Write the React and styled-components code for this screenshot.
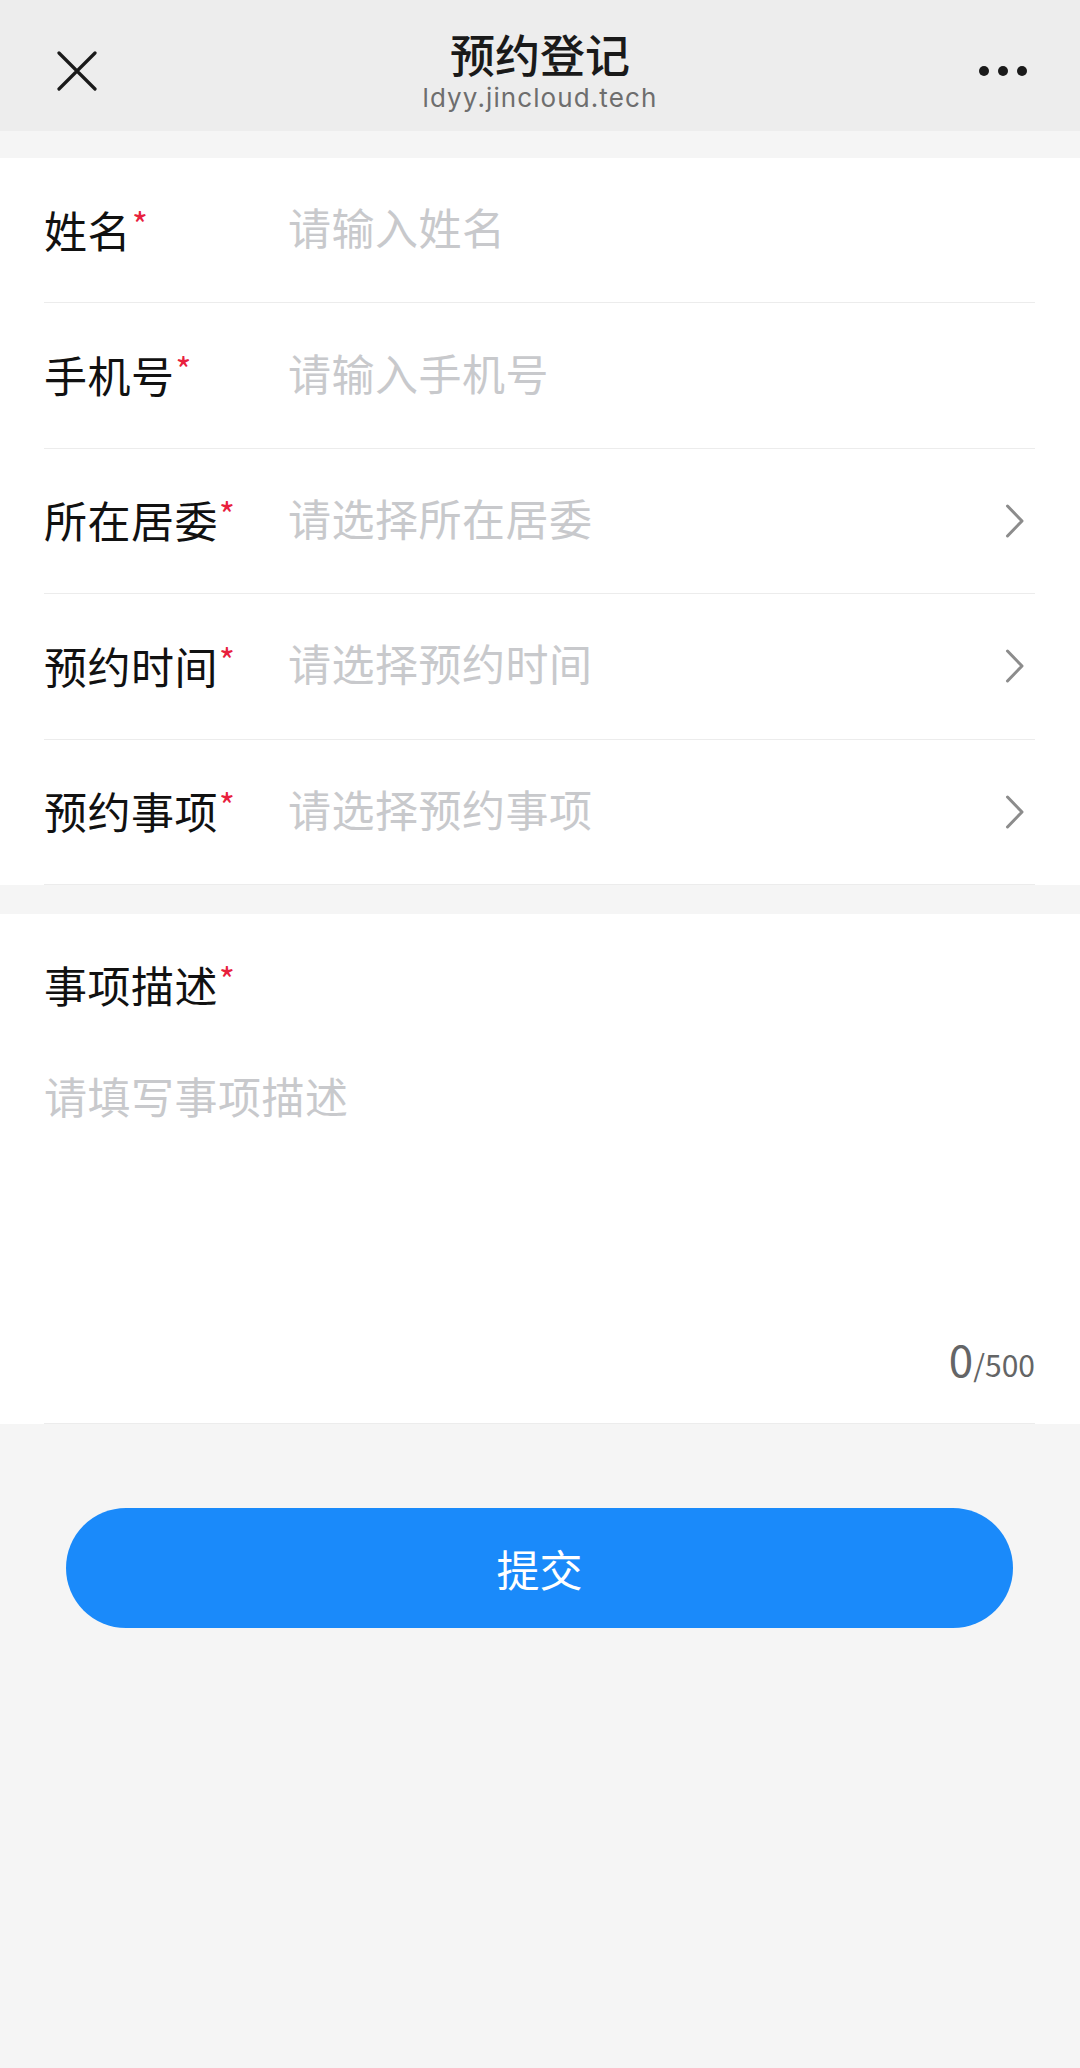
import React, { useState } from "react";
import styled, { createGlobalStyle } from "styled-components";

const GlobalStyle = createGlobalStyle`
  html, body { margin: 0; padding: 0; background: #f5f5f5; }
  body { font-family: "Noto Sans CJK SC", "Noto Sans", sans-serif; }
  * { box-sizing: border-box; }
`;

const Page = styled.div`
  min-height: 100vh;
  background: #f5f5f5;
  display: flex;
  flex-direction: column;
`;

const NavBar = styled.header`
  height: 131px;
  background: #ededed;
  display: grid;
  grid-template-columns: 160px 1fr 160px;
  align-items: center;
`;

const NavButton = styled.button`
  border: 0;
  background: transparent;
  padding: 0;
  height: 131px;
  display: flex;
  align-items: center;
  justify-content: ${(p) => (p.$right ? "flex-end" : "flex-start")};
  padding-left: ${(p) => (p.$right ? "0" : "57px")};
  padding-right: ${(p) => (p.$right ? "53px" : "0")};
  padding-top: 10px;
  cursor: pointer;
`;

const TitleBlock = styled.div`
  display: flex;
  flex-direction: column;
  align-items: center;
  padding-top: 8px;
`;

const Title = styled.h1`
  margin: 0;
  font-size: 45px;
  line-height: 56px;
  font-weight: 500;
  color: #1a1a1a;
`;

const SubTitle = styled.div`
  font-family: Inter, "Liberation Sans", sans-serif;
  font-size: 26px;
  line-height: 32px;
  letter-spacing: 1.1px;
  color: #6e6e6e;
`;

const Dots = styled.span`
  display: flex;
  gap: 9px;
`;

const Dot = styled.span`
  width: 10px;
  height: 10px;
  border-radius: 50%;
  background: #1a1a1a;
`;

const Section = styled.section`
  background: #fff;
  margin-top: ${(p) => p.$top}px;
  display: flex;
  flex-direction: column;
`;

const Row = styled.label`
  height: 145.4px;
  margin: 0 45px 0 44px;
  padding-bottom: 8px;
  border-bottom: 1px solid #ececec;
  display: flex;
  align-items: center;
`;

const Label = styled.span`
  width: 244px;
  flex-shrink: 0;
  font-size: 43px;
  line-height: 60px;
  letter-spacing: 0.5px;
  color: #111;
  white-space: nowrap;
`;

const Star = styled.span`
  color: #e8203d;
  font-size: 34px;
  vertical-align: 0.3em;
  margin-left: 1px;
`;

const Input = styled.input`
  flex: 1;
  min-width: 0;
  border: 0;
  outline: none;
  background: transparent;
  padding: 0;
  font-family: inherit;
  font-size: 43px;
  line-height: 60px;
  letter-spacing: 0.5px;
  color: #111;
  cursor: ${(p) => (p.readOnly ? "pointer" : "text")};
  &::placeholder { color: #c8c9cc; }
`;

const Chevron = styled.svg`
  flex-shrink: 0;
  margin-right: 10px;
  margin-top: 8px;
`;

const DescBlock = styled.div`
  margin: 0 45px 0 44px;
  padding: 35px 0 40px;
  border-bottom: 1px solid #ececec;
  display: flex;
  flex-direction: column;
`;

const TextArea = styled.textarea`
  margin-top: 51px;
  height: 262px;
  border: 0;
  outline: none;
  resize: none;
  padding: 0;
  font-family: inherit;
  font-size: 43px;
  line-height: 60px;
  letter-spacing: 0.5px;
  color: #111;
  background: transparent;
  &::placeholder { color: #c8c9cc; }
`;

const Counter = styled.div`
  text-align: right;
  height: 50px;
  line-height: 50px;
  color: #646566;
  font-size: 30px;
  margin-top: 6px;
`;

const CountNow = styled.span`
  font-size: 44px;
`;

const SubmitButton = styled.button`
  margin: 84px 67px 0 66px;
  height: 120px;
  border: 0;
  border-radius: 60px;
  background: #1a8afa;
  color: #fff;
  font-family: inherit;
  font-size: 43px;
  cursor: pointer;
`;

const rows = [
  { label: "姓名", placeholder: "请输入姓名" },
  { label: "手机号", placeholder: "请输入手机号", type: "tel" },
  { label: "所在居委", placeholder: "请选择所在居委", picker: true },
  { label: "预约时间", placeholder: "请选择预约时间", picker: true },
  { label: "预约事项", placeholder: "请选择预约事项", picker: true },
];

export default function App() {
  const [desc, setDesc] = useState("");
  return (
    <Page>
      <GlobalStyle />
      <NavBar>
        <NavButton aria-label="关闭">
          <svg width="40" height="40" viewBox="0 0 40 40">
            <path d="M2 2 L38 38 M38 2 L2 38" stroke="#1a1a1a" strokeWidth="3.2" strokeLinecap="round" />
          </svg>
        </NavButton>
        <TitleBlock>
          <Title>预约登记</Title>
          <SubTitle>ldyy.jincloud.tech</SubTitle>
        </TitleBlock>
        <NavButton $right aria-label="更多">
          <Dots>
            <Dot />
            <Dot />
            <Dot />
          </Dots>
        </NavButton>
      </NavBar>

      <Section $top={27}>
        {rows.map((r) => (
          <Row key={r.label}>
            <Label>
              {r.label}
              <Star>*</Star>
            </Label>
            <Input placeholder={r.placeholder} readOnly={r.picker} type={r.type || "text"} />
            {r.picker && (
              <Chevron width="20" height="36" viewBox="0 0 20 36">
                <path d="M2.5 3 L17 18 L2.5 33" fill="none" stroke="#8c8c8c" strokeWidth="3" strokeLinecap="round" strokeLinejoin="round" />
              </Chevron>
            )}
          </Row>
        ))}
      </Section>

      <Section $top={29}>
        <DescBlock>
          <Label>
            事项描述
            <Star>*</Star>
          </Label>
          <TextArea
            placeholder="请填写事项描述"
            maxLength={500}
            value={desc}
            onChange={(e) => setDesc(e.target.value)}
          />
          <Counter>
            <CountNow>{desc.length}</CountNow>/500
          </Counter>
        </DescBlock>
      </Section>

      <SubmitButton>提交</SubmitButton>
    </Page>
  );
}
